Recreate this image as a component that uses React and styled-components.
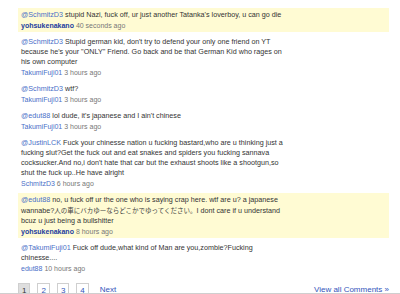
import React from "react";
import styled, { createGlobalStyle } from "styled-components";

const GlobalStyle = createGlobalStyle`
  html, body {
    margin: 0;
    padding: 0;
    background: #fff;
  }
  body {
    font-family: "Liberation Sans", Arial, "Noto Sans CJK JP", sans-serif;
    overflow: hidden;
  }
`;

const comments = [
  {
    id: 1,
    to: "@SchmitzD3",
    text: "stupid Nazi, fuck off, ur just another Tatanka's loverboy, u can go die",
    author: "yohsukenakano",
    time: "40 seconds ago",
    owner: true,
  },
  {
    id: 2,
    to: "@SchmitzD3",
    text: 'Stupid german kid, don\'t try to defend your only one friend on YT because he\'s your "ONLY" Friend. Go back and be that German Kid who rages on his own computer',
    author: "TakumiFuji01",
    time: "3 hours ago",
  },
  {
    id: 3,
    to: "@SchmitzD3",
    text: "wtf?",
    author: "TakumiFuji01",
    time: "3 hours ago",
  },
  {
    id: 4,
    to: "@edut88",
    text: "lol dude, it's japanese and I ain't chinese",
    author: "TakumiFuji01",
    time: "3 hours ago",
  },
  {
    id: 5,
    to: "@JustinLCK",
    text: "Fuck your chinesse nation u fucking bastard,who are u thinking just a fucking slut?Get the fuck out and eat snakes and spiders you fucking sannava cocksucker.And no,i don't hate that car but the exhaust shoots like a shootgun,so shut the fuck up..He have alright",
    author: "SchmitzD3",
    time: "6 hours ago",
  },
  {
    id: 6,
    to: "@edut88",
    text: "no, u fuck off ur the one who is saying crap here. wtf are u? a japanese wannabe?",
    jp: "人の車にバカゆーならどこかでゆってください。",
    after: "I dont care if u understand bcuz u just being a bullshitter",
    author: "yohsukenakano",
    time: "8 hours ago",
    owner: true,
  },
  {
    id: 7,
    to: "@TakumiFuji01",
    text: "Fuck off dude,what kind of Man are you,zombie?Fucking chinesse....",
    author: "edut88",
    time: "10 hours ago",
  },
];

const App = () => {
  return (
    <Page>
      <GlobalStyle />
      <List>
        {comments.map((c) => (
          <Comment key={c.id} $owner={c.owner}>
            <Body>
              <Mention href="#">{c.to}</Mention> {c.text}
              {c.jp && <Japanese>{c.jp}</Japanese>}
              {c.after}
            </Body>
            <Meta>
              <Author href="#" $owner={c.owner}>
                {c.author}
              </Author>{" "}
              {c.time}
            </Meta>
          </Comment>
        ))}
      </List>

      <Footer>
        <Pager>
          <PageBox $current>1</PageBox>
          <PageBox href="#">2</PageBox>
          <PageBox href="#">3</PageBox>
          <PageBox href="#">4</PageBox>
          <NextLink href="#">Next</NextLink>
        </Pager>
        <ViewAll href="#">View all Comments »</ViewAll>
      </Footer>
    </Page>
  );
};

const Page = styled.div`
  box-sizing: border-box;
  width: 400px;
  height: 294px;
  padding: 8px 11px 0 18px;
  overflow: hidden;
  border-bottom: 1px solid #cfcfcf;
`;

const List = styled.div`
  display: flex;
  flex-direction: column;
  gap: 3px;
`;

const Comment = styled.div`
  background: ${(p) => (p.$owner ? "#fffbd3" : "transparent")};
  padding: 2px 3px 1px;
`;

const Body = styled.div`
  max-width: 268px;
  font-size: 7.2px;
  line-height: 10px;
  color: #333;
`;

const Japanese = styled.span`
  font-family: "Noto Sans CJK JP", sans-serif;
  font-size: 6.5px;
  line-height: 10px;
  color: #444;
`;

const Mention = styled.a`
  color: #4a6fc8;
  text-decoration: none;
`;

const Meta = styled.div`
  font-size: 7px;
  line-height: 11px;
  color: #777;
`;

const Author = styled.a`
  color: ${(p) => (p.$owner ? "#1b3c9e" : "#4a6fc8")};
  font-weight: ${(p) => (p.$owner ? "bold" : "normal")};
  text-decoration: none;
`;

const Footer = styled.div`
  display: flex;
  justify-content: space-between;
  align-items: flex-start;
  margin-top: 8px;
`;

const Pager = styled.div`
  display: flex;
  align-items: flex-start;
  gap: 7px;
`;

const PageBox = styled.a`
  box-sizing: border-box;
  min-width: 11px;
  height: 14px;
  padding: 2px 3px 0;
  border: 1px solid #cfcfcf;
  background: ${(p) => (p.$current ? "#dedede" : "#fff")};
  color: ${(p) => (p.$current ? "#333" : "#3355bb")};
  font-size: 8px;
  line-height: 9px;
  text-align: center;
  text-decoration: none;
`;

const NextLink = styled.a`
  margin-left: 4px;
  padding-top: 2px;
  color: #3355bb;
  font-size: 8px;
  line-height: 9px;
  text-decoration: none;
`;

const ViewAll = styled.a`
  padding-top: 2px;
  color: #3355bb;
  font-size: 8px;
  line-height: 9px;
  text-decoration: none;
`;

export default App;
